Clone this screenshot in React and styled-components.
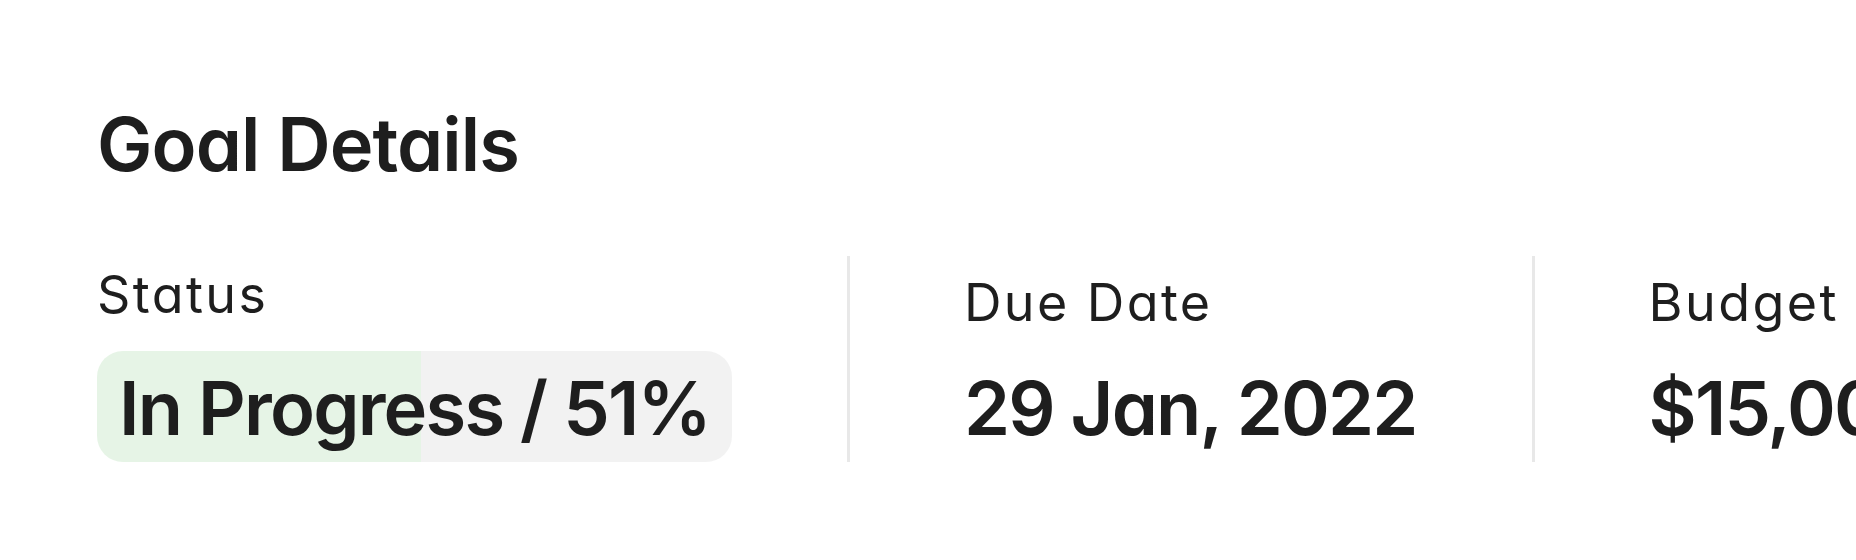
import React from 'react';
import styled, { createGlobalStyle } from 'styled-components';

const GlobalStyle = createGlobalStyle`
  html, body {
    margin: 0;
    padding: 0;
    background: #ffffff;
    overflow: hidden;
  }
  body {
    font-family: Inter, "Noto Sans", sans-serif;
    font-feature-settings: 'cv11' 1;
    color: #1e1e1e;
  }
`;

const Page = styled.div`
  padding: 100px 0 0 97px;
  width: 1856px;
  height: 560px;
  box-sizing: border-box;
`;

const Title = styled.h2`
  margin: 0 0 67px;
  font-size: 74px;
  line-height: 89px;
  font-weight: 600;
  letter-spacing: -0.9px;
`;

const Row = styled.div`
  display: flex;
  align-items: stretch;
  white-space: nowrap;
`;

const Column = styled.div`
  display: flex;
  flex-direction: column;
  justify-content: flex-end;
  flex-shrink: 0;
  padding: 0 115px 0 114px;

  &:first-child {
    padding-left: 0;
  }

  & + & {
    border-left: 3px solid #e8e8e8;
  }
`;

const Label = styled.div`
  font-size: 52px;
  line-height: 78px;
  font-weight: 400;
  letter-spacing: 2.4px;
  margin-bottom: ${(p) => p.gap}px;
`;

const Value = styled.div`
  font-size: 74px;
  line-height: 89px;
  font-weight: 600;
  letter-spacing: -1.8px;
  padding: 13px 0 9px;
`;

const Pill = styled(Value)`
  padding: 13px 22px 9px;
  border-radius: 26px;
  background: linear-gradient(
    to right,
    #e6f4e6 0%,
    #e6f4e6 ${(p) => p.progress}%,
    #f2f2f2 ${(p) => p.progress}%,
    #f2f2f2 100%
  );
`;

const details = [
  { label: 'Due Date', value: '29 Jan, 2022' },
  { label: 'Budget', value: '$15,000' },
];

const App = () => (
  <Page>
    <GlobalStyle />
    <Title>Goal Details</Title>
    <Row>
      <Column>
        <Label gap={17}>Status</Label>
        <Pill progress={51}>In Progress / 51%</Pill>
      </Column>
      {details.map((d) => (
        <Column key={d.label}>
          <Label gap={9}>{d.label}</Label>
          <Value>{d.value}</Value>
        </Column>
      ))}
    </Row>
  </Page>
);

export default App;
